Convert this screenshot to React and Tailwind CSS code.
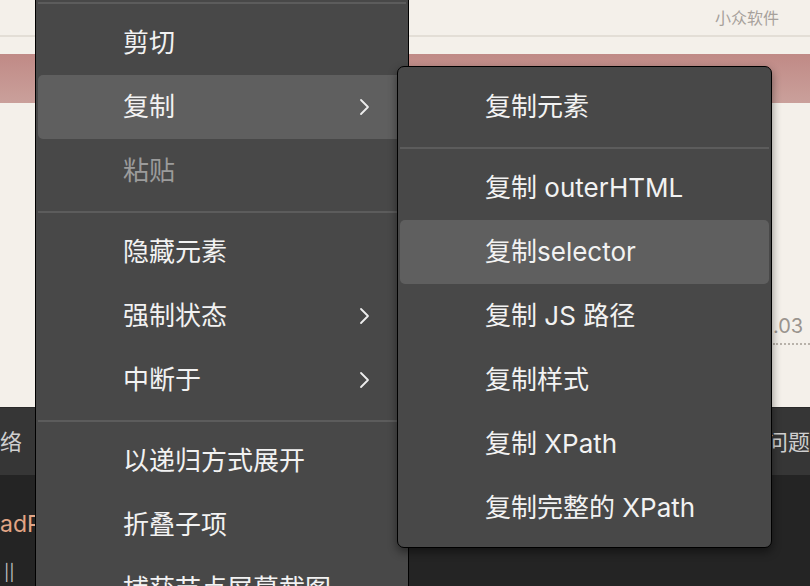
import React from "react";

const FONT = { fontFamily: 'Inter, "Noto Sans CJK SC", sans-serif' };

function Chevron() {
  return (
    <svg width="12" height="18" viewBox="0 0 12 18" className="absolute right-[36px] top-1/2 -translate-y-1/2">
      <path d="M3 2 L10 9 L3 16" fill="none" stroke="#ededed" strokeWidth="1.8" strokeLinecap="round" strokeLinejoin="round" />
    </svg>
  );
}

function Item({ label, active, disabled, sub }) {
  return (
    <div
      className={`relative h-[64px] mx-[2px] rounded-[5px] flex items-center pl-[85px] text-[26px] ${
        active ? "bg-[#5f5f5f]" : ""
      } ${disabled ? "text-[#9b9b9b]" : "text-[#f2f2f2]"}`}
    >
      <span className="leading-none">{label}</span>
      {sub && <Chevron />}
    </div>
  );
}

function Sep() {
  return (
    <div className="h-[17px] flex items-center px-[2px]">
      <div className="h-[2px] w-full bg-[#5c5c5c]" />
    </div>
  );
}

export default function App() {
  return (
    <div className="relative w-[810px] h-[586px] overflow-hidden bg-[#242424]" style={FONT}>
      {/* background page */}
      <div className="flex flex-col h-full">
        <div className="h-[407px] bg-[#f4f0ea] flex flex-col">
          <div className="h-[37px] border-b-2 border-[#e3ded6] flex items-center justify-end pr-[31px] text-[16px] text-[#a7a19b]">
            小众软件
          </div>
          <div className="h-[17px]" />
          <div className="h-[49px] bg-gradient-to-b from-[#c08a86] to-[#caa09b]" />
          <div className="flex-1 flex justify-end pt-[213px]">
            <div className="w-[37px] flex flex-col items-start">
              <span className="text-[20px] leading-none text-[#9a948e]">.03</span>
              <div className="mt-[7px] w-full border-b-2 border-dotted border-[#b8b2aa]" />
            </div>
          </div>
        </div>
        <div className="h-[68px] bg-[#363636] border-t border-[#2a2a2a] flex items-center justify-between text-[22px] text-[#cfcfcf]">
          <span className="leading-none">络</span>
          <span className="leading-none">问题</span>
        </div>
        <div className="flex-1 bg-[#242424] flex flex-col">
          <div className="pt-[38px] text-[23px] leading-none text-[#e2a585] whitespace-nowrap">adP</div>
          <div className="pt-[28px] pl-[4px] text-[16px] leading-none text-[#bdbdbd]">||</div>
        </div>
      </div>

      {/* main context menu */}
      <div className="absolute left-[35px] top-[-7px] w-[374px] h-[640px] bg-[#484848] border border-black">
        <Sep />
        <Item label="剪切" />
        <Item label="复制" active sub />
        <Item label="粘贴" disabled />
        <Sep />
        <Item label="隐藏元素" />
        <Item label="强制状态" sub />
        <Item label="中断于" sub />
        <Sep />
        <Item label="以递归方式展开" />
        <Item label="折叠子项" />
        <Item label="捕获节点屏幕截图" />
      </div>

      {/* submenu */}
      <div className="absolute left-[397px] top-[66px] w-[375px] h-[482px] bg-[#484848] border border-black rounded-[7px] py-[8px] shadow-[0_4px_10px_rgba(0,0,0,0.45)]">
        <Item label="复制元素" />
        <Sep />
        <Item label="复制 outerHTML" />
        <Item label="复制selector" active />
        <Item label="复制 JS 路径" />
        <Item label="复制样式" />
        <Item label="复制 XPath" />
        <Item label="复制完整的 XPath" />
      </div>
    </div>
  );
}
